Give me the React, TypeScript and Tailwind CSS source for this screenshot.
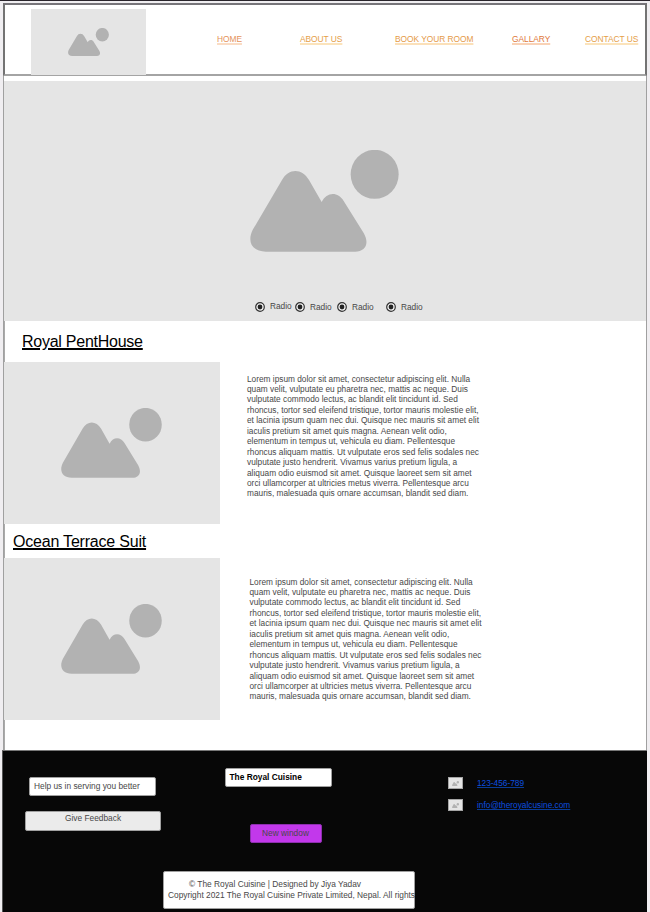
import React from "react";

function Mountains({ className }: { className: string }) {
  return (
    <svg viewBox="61 60 447 306" preserveAspectRatio="none" className={className} fill="currentColor">
      <path d="M157 150C177 114 217 114 238 150L276 216C291 185 325 184 342 213L402 309C420 340 408 365 376 365H109C64 365 52 332 70 298Z" />
      <ellipse cx="435" cy="133" rx="72" ry="73.5" />
    </svg>
  );
}

function Placeholder({ box, art }: { box: string; art: string }) {
  return (
    <div className={`flex shrink-0 items-center justify-center bg-[#e5e5e5] text-[#b2b2b2] ${box}`}>
      <Mountains className={art} />
    </div>
  );
}

const links = [
  { label: "HOME", style: "ml-[71px] w-[83px] text-[#e5925a] decoration-[#fadcc4]" },
  { label: "ABOUT US", style: "w-[95px] text-[#e59e48] decoration-[#fbe3bb]" },
  { label: "BOOK YOUR ROOM", style: "w-[117px] text-[#e59a48] decoration-[#fbe0b9]" },
  { label: "GALLARY", style: "w-[73px] text-[#e0783a] decoration-[#f9d2b6]" },
  { label: "CONTACT US", style: "text-[#e59e48] decoration-[#fbe3bb]" },
];

const radios = [
  { width: "w-[40px]", text: "-mt-px" },
  { width: "w-[42px]", text: "" },
  { width: "w-[49px]", text: "" },
  { width: "w-[40px]", text: "" },
];

const lorem = [
  "Lorem ipsum dolor sit amet, consectetur adipiscing elit. Nulla",
  "quam velit, vulputate eu pharetra nec, mattis ac neque. Duis",
  "vulputate commodo lectus, ac blandit elit tincidunt id. Sed",
  "rhoncus, tortor sed eleifend tristique, tortor mauris molestie elit,",
  "et lacinia ipsum quam nec dui. Quisque nec mauris sit amet elit",
  "iaculis pretium sit amet quis magna. Aenean velit odio,",
  "elementum in tempus ut, vehicula eu diam. Pellentesque",
  "rhoncus aliquam mattis. Ut vulputate eros sed felis sodales nec",
  "vulputate justo hendrerit. Vivamus varius pretium ligula, a",
  "aliquam odio euismod sit amet. Quisque laoreet sem sit amet",
  "orci ullamcorper at ultricies metus viverra. Pellentesque arcu",
  "mauris, malesuada quis ornare accumsan, blandit sed diam.",
];

function Lorem({ className }: { className: string }) {
  return (
    <p className={`text-[8.3px] leading-[10.45px] whitespace-pre text-[#484848] ${className}`}>
      {lorem.join("\n")}
    </p>
  );
}

function Contact({ text }: { text: string }) {
  return (
    <div className="flex h-[12px] items-center gap-[14px]">
      <div className="flex h-[12px] w-[15px] items-center justify-center border border-[#a5a5a5] bg-[#e5e5e5] text-[#b2b2b2]">
        <Mountains className="h-[5px] w-[7px]" />
      </div>
      <a className="text-[8.3px] leading-[12px] text-[#0b50e0] underline decoration-[#0a3c96] decoration-1 underline-offset-1">{text}</a>
    </div>
  );
}

export default function App() {
  return (
    <div className="flex h-[912px] w-[650px] flex-col overflow-hidden border-t border-[#2a252c] bg-[#f0eef1] font-['Liberation_Sans',Arial,sans-serif]">
      <main className="mt-[2px] ml-[3px] flex h-[747px] w-[644px] shrink-0 flex-col border-r border-l border-[#a0a0a0] bg-white">
        <header className="-mx-px flex h-[73px] shrink-0 border-2 border-[#737373] border-t-[#77757a] border-b-[#a4a4a4] pl-[26px]">
          <Placeholder box="mt-[4px] h-[66px] w-[115px]" art="h-[28px] w-[41px]" />
          <nav className="flex pt-[28px] text-[8.4px] leading-[12px] tracking-[-0.04px] whitespace-nowrap">
            {links.map((l) => (
              <a key={l.label} className={`underline decoration-2 underline-offset-1 ${l.style}`}>{l.label}</a>
            ))}
          </nav>
        </header>
        <section className="mt-[5px] flex h-[240px] shrink-0 flex-col items-center bg-[#e5e5e5] text-[#b2b2b2]">
          <Mountains className="mt-[69px] mr-[1px] h-[102px] w-[149px]" />
          <div className="mt-[49px] flex w-full pl-[250.5px]">
            {radios.map((r, i) => (
              <label key={i} className={`flex h-[12px] items-center gap-[5.5px] text-[8.3px] text-[#484848] ${r.width}`}>
                <svg viewBox="0 0 10 10" className={`size-[10px] shrink-0 ${r.text}`}>
                  <circle cx="5" cy="5" r="4.3" fill="#f3f3f3" stroke="#333" strokeWidth="1.2" />
                  <circle cx="5" cy="5" r="2.4" fill="#222" />
                </svg>
                <span className={r.text}>Radio</span>
              </label>
            ))}
          </div>
        </section>
        <h2 className="h-[41px] shrink-0 border-l border-[#aaa] pt-[12px] pl-[17px] text-[16px] leading-[18px] tracking-[-0.25px] text-black underline decoration-[1.5px] underline-offset-1">Royal PentHouse</h2>
        <div className="flex h-[162px] shrink-0">
          <Placeholder box="h-[162px] w-[216px] pr-[0.5px]" art="h-[70px] w-[101px]" />
          <Lorem className="pt-[11.5px] pl-[27px]" />
        </div>
        <h2 className="h-[34px] shrink-0 border-l border-[#aaa] pt-[9px] pl-[8px] text-[16px] leading-[18px] tracking-[-0.2px] text-black underline decoration-[1.5px] underline-offset-1">Ocean Terrace Suit</h2>
        <div className="flex h-[162px] shrink-0">
          <Placeholder box="h-[162px] w-[216px] pr-[0.5px]" art="h-[70px] w-[101px]" />
          <Lorem className="pt-[18.5px] pl-[29.5px]" />
        </div>
        <div className="grow border-l border-[#aaa]" />
      </main>
      <footer className="ml-[2px] flex h-[162px] w-[645px] shrink-0 flex-col border-t border-l border-[#777] border-l-[#555] bg-[#070707] text-[8.35px] text-[#484848]">
        <div className="flex h-[120px] shrink-0">
          <div className="w-[222px] pt-[26px] pl-[22px]">
            <div className="ml-[4px] h-[19px] w-[127px] rounded-[2px] border border-[#a0a0a0] bg-white pl-[4px] leading-[17px]">Help us in serving you better</div>
            <div className="mt-[15px] h-[20px] w-[136px] rounded-[2px] border border-[#a0a0a0] bg-[#ebebeb] text-center leading-[12px]">Give Feedback</div>
          </div>
          <div className="w-[223px] pt-[17px]">
            <div className="h-[19px] w-[107px] rounded-[2px] border border-[#a0a0a0] bg-white pl-[3.5px] leading-[17px] font-bold text-black">The Royal Cuisine</div>
            <div className="mt-[37px] ml-[24.5px] h-[19px] w-[72px] rounded-[2px] border border-[#8d2fae] bg-[#c238eb] text-center leading-[17px]">New window</div>
          </div>
          <div className="flex flex-col gap-[10px] pt-[26px]">
            <Contact text="123-456-789" />
            <Contact text="info@theroyalcusine.com" />
          </div>
        </div>
        <div className="ml-[160px] h-[38px] w-[252px] shrink-0 rounded-[2px] border border-[#a0a0a0] bg-white pt-[7px] pl-[4px] leading-[11px] whitespace-nowrap">
          <p className="pl-[21px]">© The Royal Cuisine | Designed by Jiya Yadav</p>
          <p>Copyright 2021 The Royal Cuisine Private Limited, Nepal. All rights</p>
        </div>
      </footer>
    </div>
  );
}
